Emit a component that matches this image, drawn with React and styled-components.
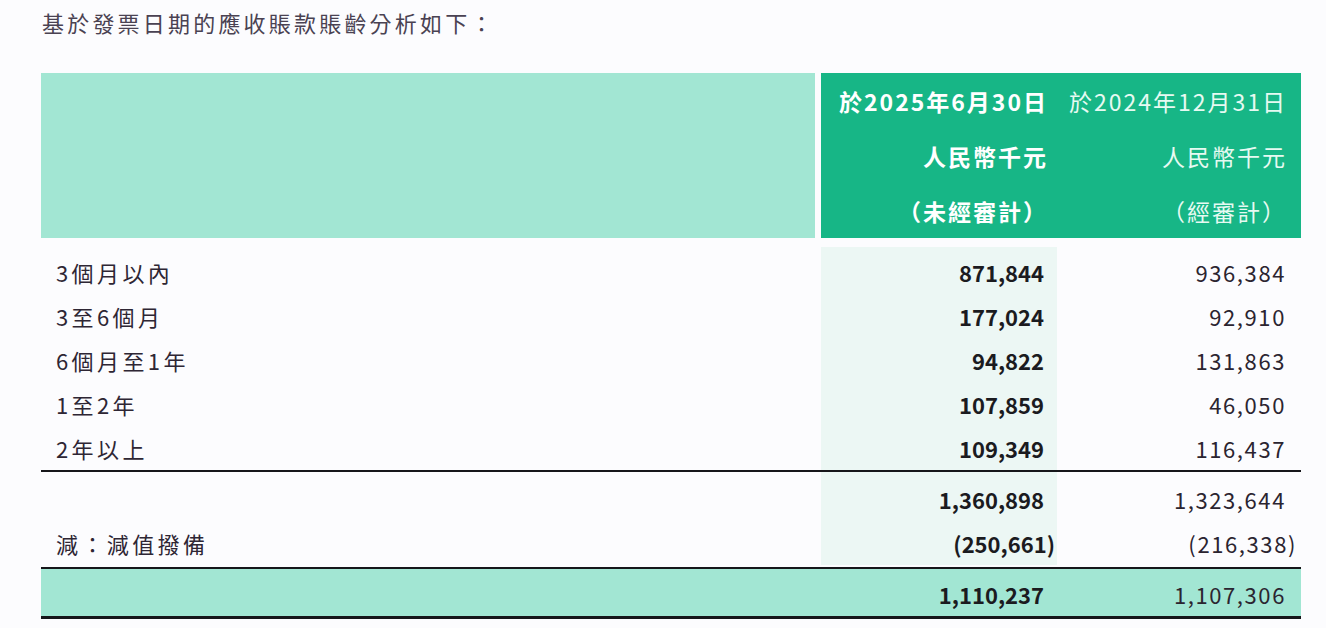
import React from "react";
import styled, { createGlobalStyle } from "styled-components";

const GlobalStyle = createGlobalStyle`
  html, body {
    margin: 0;
    padding: 0;
    background: #fcfcfe;
  }
  body {
    font-family: "Noto Sans CJK TC", "Noto Sans", sans-serif;
    color: #2b2430;
  }
`;

const rows = [
  { label: "3個月以內", current: "871,844", prior: "936,384" },
  { label: "3至6個月", current: "177,024", prior: "92,910" },
  { label: "6個月至1年", current: "94,822", prior: "131,863" },
  { label: "1至2年", current: "107,859", prior: "46,050" },
  { label: "2年以上", current: "109,349", prior: "116,437" },
];

function Amount({ value, negative }) {
  if (!negative) return value;
  return (
    <>
      ({value}
      <Paren>)</Paren>
    </>
  );
}

function App() {
  return (
    <Page>
      <GlobalStyle />
      <Title>基於發票日期的應收賬款賬齡分析如下：</Title>
      <Table>
        <Header>
          <HeaderBlank />
          <HeaderGreen>
            <HeadCell $bold>於2025年6月30日</HeadCell>
            <HeadCell>於2024年12月31日</HeadCell>
            <HeadCell $bold>人民幣千元</HeadCell>
            <HeadCell>人民幣千元</HeadCell>
            <HeadCell $bold>（未經審計）</HeadCell>
            <HeadCell>（經審計）</HeadCell>
          </HeaderGreen>
        </Header>

        <Body>
          <Row $h={3}>
            <Label />
            <Current $tint />
            <Prior />
          </Row>
          {rows.map((r) => (
            <Row key={r.label}>
              <Label>{r.label}</Label>
              <Current $tint>{r.current}</Current>
              <Prior>{r.prior}</Prior>
            </Row>
          ))}
          <Rule $size={2} />
          <Row $h={5}>
            <Label />
            <Current $tint />
            <Prior />
          </Row>
          <Row>
            <Label />
            <Current $tint>1,360,898</Current>
            <Prior>1,323,644</Prior>
          </Row>
          <Row $h={46} $pad={2}>
            <Label>減：減值撥備</Label>
            <Current $tint>
              <Amount value="250,661" negative />
            </Current>
            <Prior>
              <Amount value="216,338" negative />
            </Prior>
          </Row>
          <Rule $size={2} />
          <TotalRow>
            <Label />
            <Current>1,110,237</Current>
            <Prior>1,107,306</Prior>
          </TotalRow>
          <Rule $size={3} />
        </Body>
      </Table>
    </Page>
  );
}

const Page = styled.div`
  padding: 8px 25px 0 41px;
`;

const Title = styled.div`
  margin-left: 1px;
  height: 28px;
  line-height: 28px;
  font-size: 22px;
  letter-spacing: 3.2px;
  color: #4a4252;
  margin-bottom: 37px;
`;

const Table = styled.div`
  width: 1260px;
`;

const Header = styled.div`
  display: flex;
  gap: 6px;
  height: 165px;
`;

const HeaderBlank = styled.div`
  width: 774px;
  background: #a2e6d3;
`;

const HeaderGreen = styled.div`
  flex: 1;
  display: grid;
  grid-template-columns: 236px 244px;
  grid-auto-rows: 55px;
  background: #17b686;
  color: #ffffff;
`;

const HeadCell = styled.div`
  display: flex;
  align-items: center;
  justify-content: flex-end;
  font-size: 23px;
  font-weight: ${(p) => (p.$bold ? 700 : 400)};
  letter-spacing: 2px;
  padding-right: ${(p) => (p.$bold ? "9px" : "14px")};
  color: ${(p) => (p.$bold ? "#ffffff" : "#e6faf2")};
`;

const Body = styled.div`
  display: flex;
  flex-direction: column;
  padding-top: 9px;
`;

const Row = styled.div`
  display: grid;
  grid-template-columns: 780px 236px 244px;
  height: ${(p) => p.$h || 44}px;
  padding-bottom: ${(p) => p.$pad || 0}px;
  box-sizing: border-box;
  align-items: stretch;
`;

const TotalRow = styled(Row)`
  height: 47px;
  padding-top: 3px;
  background: #a2e6d3;
`;

const Label = styled.div`
  display: flex;
  align-items: center;
  padding-left: 15px;
  font-size: 22px;
  letter-spacing: 3.4px;
  color: #2e2634;
`;

const Current = styled.div`
  display: flex;
  align-items: center;
  justify-content: flex-end;
  padding-right: 13px;
  font-size: 22px;
  font-weight: 700;
  color: #1b1b1f;
  background: ${(p) => (p.$tint ? "#ecf7f4" : "transparent")};
`;

const Prior = styled.div`
  display: flex;
  align-items: center;
  justify-content: flex-end;
  padding-right: 15px;
  font-size: 22px;
  letter-spacing: 1.6px;
  color: #2b2430;
`;

const Paren = styled.span`
  margin-right: -11px;
`;

const Rule = styled.div`
  height: ${(p) => p.$size}px;
  background: #16161a;
`;

export default App;
